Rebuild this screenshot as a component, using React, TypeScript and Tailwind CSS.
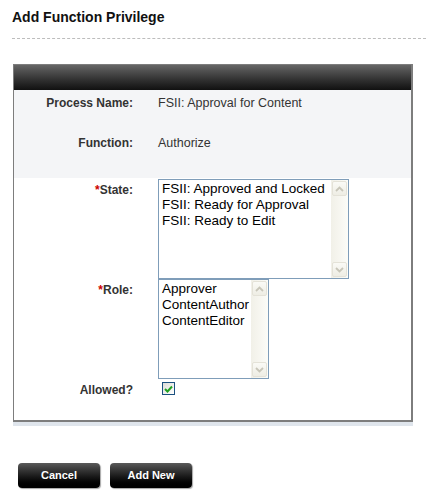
import React from "react";

const font = "font-['Liberation_Sans',Arial,sans-serif]";

function Arrow({ up }: { up?: boolean }) {
  return (
    <svg width="9" height="6" viewBox="0 0 9 6">
      <path
        d={up ? "M1 5 L4.5 1.5 L8 5" : "M1 1 L4.5 4.5 L8 1"}
        fill="none"
        stroke="#c8c6b9"
        strokeWidth="1.8"
      />
    </svg>
  );
}

function ScrollBar() {
  return (
    <div className="flex w-[17px] flex-col justify-between bg-gradient-to-r from-[#f1f0e8] to-[#fcfcf8]">
      <div className="m-px flex h-[15px] items-center justify-center rounded-[2px] border border-[#e4e2d8] bg-gradient-to-b from-[#fafaf6] to-[#eeede4]">
        <Arrow up />
      </div>
      <div className="m-px flex h-[15px] items-center justify-center rounded-[2px] border border-[#e4e2d8] bg-gradient-to-b from-[#fafaf6] to-[#eeede4]">
        <Arrow />
      </div>
    </div>
  );
}

function ListBox({ items, width }: { items: string[]; width: string }) {
  return (
    <div className={`flex h-[100px] border border-[#7f9db9] bg-white ${width}`}>
      <div className="flex-1 pl-[3px] pt-px text-[13.5px] leading-[16px] text-black">
        {items.map((item) => (
          <div key={item} className="whitespace-nowrap">
            {item}
          </div>
        ))}
      </div>
      <ScrollBar />
    </div>
  );
}

function Label({ text, required }: { text: string; required?: boolean }) {
  return (
    <div className="text-right text-[12px] font-bold leading-[14px] text-[#333]">
      {required && <span className="text-[#cc0000]">*</span>}
      {text}
    </div>
  );
}

export default function App() {
  return (
    <div className={`min-h-[500px] w-[426px] bg-white ${font}`}>
      {/* Title */}
      <div className="px-3 pt-[9px]">
        <h1 className="text-[14px] font-bold leading-[17px] text-[#111]">
          Add Function Privilege
        </h1>
      </div>
      <div className="ml-3 mt-[12px] border-t border-dashed border-[#bdbdbd]" />

      {/* Form box */}
      <div className="ml-[13px] mt-[25px] w-[400px]">
        <div className="border-b-2 border-l border-r-2 border-t border-[#7d7d7d]">
          <div className="h-[25px] bg-gradient-to-b from-[#666] to-[#111]" />

          {/* Read-only rows */}
          <div className="bg-[#f4f5f7] pt-[6px]">
            <div className="grid h-[40px] grid-cols-[119px_1fr] gap-x-[25px]">
              <Label text="Process Name:" />
              <div className="text-[12.5px] leading-[14px] text-[#333]">
                FSII: Approval for Content
              </div>
            </div>
            <div className="grid h-[42px] grid-cols-[119px_1fr] gap-x-[25px]">
              <Label text="Function:" />
              <div className="text-[12.5px] leading-[14px] text-[#333]">Authorize</div>
            </div>
          </div>

          {/* Editable rows */}
          <div className="pb-[23px]">
            <div className="grid grid-cols-[119px_1fr] gap-x-[25px] pt-px">
              <div className="pt-[4px]">
                <Label text="State:" required />
              </div>
              <ListBox
                width="w-[191px]"
                items={[
                  "FSII: Approved and Locked",
                  "FSII: Ready for Approval",
                  "FSII: Ready to Edit",
                ]}
              />
            </div>
            <div className="grid grid-cols-[119px_1fr] gap-x-[25px]">
              <div className="pt-[4px]">
                <Label text="Role:" required />
              </div>
              <ListBox
                width="w-[111px]"
                items={["Approver", "ContentAuthor", "ContentEditor"]}
              />
            </div>
            <div className="grid grid-cols-[119px_1fr] gap-x-[25px] pt-[3px]">
              <div className="pt-[1px]">
                <Label text="Allowed?" />
              </div>
              <div className="pl-[4px]">
                <div className="flex h-[13px] w-[13px] items-center justify-center border border-[#1c5180] bg-gradient-to-br from-[#dcdcd7] to-white">
                  <svg width="9" height="8" viewBox="0 0 9 8">
                    <path
                      d="M1 4 L3.5 6.5 L8 1.5"
                      fill="none"
                      stroke="#21a121"
                      strokeWidth="2"
                    />
                  </svg>
                </div>
              </div>
            </div>
          </div>
        </div>
        <div className="h-[4px] w-[400px] bg-[#dfe5ec]" />
      </div>

      {/* Buttons */}
      <div className="ml-[18px] mt-[37px] flex gap-[10px]">
        {["Cancel", "Add New"].map((label) => (
          <button
            key={label}
            className="h-[25px] w-[82px] rounded-[4px] bg-gradient-to-b from-[#5a5a5a] via-[#1e1e1e] to-[#000] text-[11px] font-bold text-white shadow-[1px_1px_1px_rgba(0,0,0,0.35)]"
          >
            {label}
          </button>
        ))}
      </div>
    </div>
  );
}
